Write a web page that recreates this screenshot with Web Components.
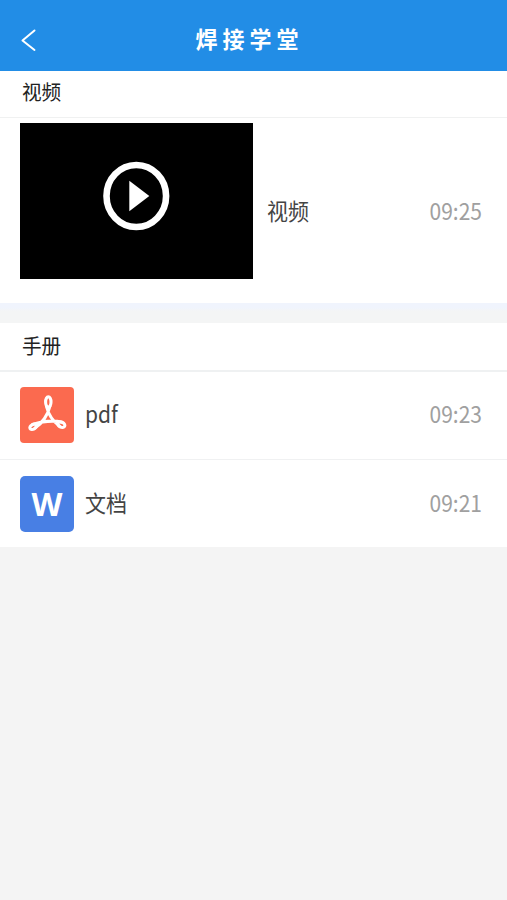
<!DOCTYPE html>
<html lang="zh-CN">
<head>
<meta charset="utf-8">
<title>焊接学堂</title>
<style>
html,body{margin:0;height:100%;background:#f4f4f4;font-family:"Noto Sans CJK SC","Noto Sans",sans-serif;overflow:hidden}
</style>
</head>
<body>
<course-page></course-page>
<script>
const define = (name, html) => customElements.define(name, class extends HTMLElement {
  constructor() {
    super();
    this.attachShadow({mode: 'open'}).innerHTML = html;
  }
});

define('nav-bar', `
<style>
:host{display:grid;grid-template-columns:60px 1fr 60px;align-items:center;height:71px;background:#228de6;color:#fff;box-sizing:border-box;padding-top:8px}
svg{display:block;margin-left:20px}
h1{margin:0;text-align:center;font-size:22px;line-height:32px;font-weight:700;letter-spacing:5px;transform:translate(-4px,-2px) scaleY(1.04)}
</style>
<svg width="18" height="24" viewBox="0 0 18 24" fill="none" stroke="#fff" stroke-width="2" stroke-linecap="round" stroke-linejoin="round"><path d="M14.5 2.5 2.5 12.5 14.5 22"/></svg>
<h1><slot></slot></h1>`);

define('list-section', `
<style>
:host{display:block;background:#fff}
header{height:47px;box-sizing:border-box;padding:0 22px;border-bottom:1px solid #f0f1f1;font-size:19.6px;line-height:42px;color:#222}
:host([manual]) header{height:49px;line-height:43px;border-bottom:2px solid #eff1f2}
span{display:inline-block;transform:scaleY(1.06)}
</style>
<header><span><slot name="title"></slot></span></header><slot></slot>`);

define('section-gap', `
<style>:host{display:block;height:20px;background:linear-gradient(#f0f4fd 0 5px,#f4f5f5 8px)}</style>`);

define('list-row', `
<style>
:host{display:flex;align-items:center;box-sizing:border-box;height:87px;padding:0 25px 0 20px;font-size:21px;line-height:30px;color:#444}
:host([divided]){height:88px;border-bottom:1px solid #f0f1f2;padding-bottom:1px}
:host([video]){height:185px;align-items:flex-start;padding-top:5px}
.name{margin-left:11px;flex:1}
:host([video]) .name{margin-left:14px}
:host([video]) .name,:host([video]) .time{margin-top:72px}
.name,.time{transform:translateY(-1.5px) scaleY(1.08)}
:host([video]) .name,:host([video]) .time{transform:scaleY(1.08)}
.time{color:#a0a0a0}
</style>
<slot name="icon"></slot><div class="name"><slot></slot></div><div class="time"><slot name="time"></slot></div>`);

define('video-thumb', `
<style>:host{display:block;width:233px;height:156px;background:#000}svg{display:block}</style>
<svg width="233" height="156" viewBox="0 0 233 156"><ellipse cx="116.3" cy="73" rx="29.8" ry="31" fill="none" stroke="#fff" stroke-width="6.6"/><path d="M109.3 57.8 129.3 73 109.3 88.2Z" fill="#fff"/></svg>`);

define('pdf-icon', `
<style>:host,svg{display:block}</style>
<svg width="54" height="56" viewBox="0 0 54 56"><rect width="54" height="56" rx="4" fill="#fb6a4f"/>
<g fill="none" stroke="#fff" stroke-width="3.1" stroke-linecap="round">
<ellipse cx="28.3" cy="15" rx="2.7" ry="5.2"/>
<ellipse cx="13.2" cy="39.8" rx="3.6" ry="2.3" transform="rotate(-28 13.2 39.8)"/>
<ellipse cx="41.3" cy="37.6" rx="3.8" ry="2.5" transform="rotate(28 41.3 37.6)"/>
<path d="M29.8 19.5C28 28 22 36.5 15 41M26.5 19.5C28.5 28 33 34.5 40 39.5M12.5 37.5C22 34.5 33 33 42 35.2"/></g></svg>`);

define('doc-icon', `
<style>
:host{display:flex;align-items:center;justify-content:center;width:54px;height:56px;border-radius:5px;background:#487fe4;color:#fff}
span{font:700 32px/56px "Open Sans","Noto Sans",sans-serif}
</style>
<span>W</span>`);

define('course-page', `
<style>:host{display:block}</style>
<nav-bar>焊接学堂</nav-bar>
<list-section>
  <span slot="title">视频</span>
  <list-row video><video-thumb slot="icon"></video-thumb>视频<span slot="time">09:25</span></list-row>
</list-section>
<section-gap></section-gap>
<list-section manual>
  <span slot="title">手册</span>
  <list-row divided><pdf-icon slot="icon"></pdf-icon>pdf<span slot="time">09:23</span></list-row>
  <list-row><doc-icon slot="icon"></doc-icon>文档<span slot="time">09:21</span></list-row>
</list-section>`);
</script>
</body>
</html>
